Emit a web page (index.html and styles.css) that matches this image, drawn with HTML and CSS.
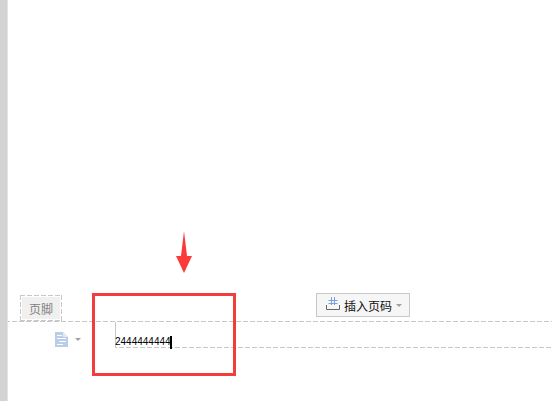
FILE: index.html
```html
<!DOCTYPE html>
<html lang="zh">
<head>
<meta charset="utf-8">
<title>页脚</title>
<link rel="stylesheet" href="styles.css">
</head>
<body>
<div class="app">
  <div class="gutter"></div>
  <main class="page">
    <div class="footer-head">
      <div class="tag"><span class="tag-text">页脚</span></div>
      <button class="insert-btn">
        <svg class="hash-icon" width="14" height="13" viewBox="0 0 14 13">
          <path d="M2.500 3.500h9M2.500 6.500h9M5.500 0v8M8.500 0v8" fill="none" stroke="#7aa0e0"/>
          <path d="M.5 8v4.500h13V8" fill="none" stroke="#666"/>
        </svg>
        <span class="btn-label">插入页码</span>
        <span class="caret"></span>
      </button>
    </div>
    <div class="footer-body">
      <div class="doc-tool">
        <svg width="13" height="15" viewBox="0 0 13 15">
          <path d="M0 0h8l5 5v10H0z" fill="#b9cde9"/>
          <path d="M8 0l5 5H8z" fill="#e3ebf6"/>
          <path d="M2 3.500h5M2 6.500h9M4 9.500h7M2 12.500h6" stroke="#fff" fill="none"/>
        </svg>
        <span class="caret"></span>
      </div>
      <div class="edit-box"><span class="edit-text">2444444444</span><span class="cursor"></span></div>
    </div>
  </main>
  <svg class="arrow" width="16" height="42" viewBox="0 0 16 42"><path d="M8 0l3 25h5L8 42 0 25h5z" fill="#fb3a3a"/></svg>
  <div class="highlight"></div>
</div>
</body>
</html>
```
FILE: styles.css
```css
* { box-sizing: border-box; }
html, body { margin: 0; height: 100%; background: #fff; overflow: hidden; }
.app { position: relative; display: flex; width: 552px; height: 401px; background: #fff; }
.gutter { width: 8px; background: #d3d3d3; border-right: 1px solid #e2e2e2; }
.page { flex: 1; display: flex; flex-direction: column; padding-top: 293px; }
.footer-head {
  height: 29px; display: flex; align-items: flex-start; position: relative;
  background: linear-gradient(90deg, #c8c8c8 5px, transparent 5px) 4px bottom / 7px 1px repeat-x;
}
.tag {
  margin: 2px 0 0 12px; width: 42px; height: 26px; display: flex; align-items: center; justify-content: center;
  background:
    linear-gradient(90deg, #c8c8c8 5px, transparent 5px) 0 0 / 7px 1px repeat-x,
    linear-gradient(90deg, #c8c8c8 5px, transparent 5px) 0 100% / 7px 1px repeat-x,
    linear-gradient(#c8c8c8 5px, transparent 5px) 0 0 / 1px 7px repeat-y,
    linear-gradient(#c8c8c8 5px, transparent 5px) 100% 0 / 1px 7px repeat-y,
    linear-gradient(#f0f0f0, #f0f0f0) center / 38px 22px no-repeat;
}
.tag-text { font: 12px "Noto Sans CJK SC", sans-serif; color: #808080; }
.insert-btn {
  margin: 0 0 0 254px; width: 94px; height: 24px; padding: 0 0 0 9px; display: flex; align-items: center;
  background: #f6f6f6; border: 1px solid #c8c8c8; border-radius: 0;
}
.hash-icon { flex: none; margin-bottom: 3px; }
.btn-label { font: 12px "Noto Sans CJK SC", sans-serif; color: #111; margin-left: 4px; white-space: nowrap; }
.caret { width: 0; height: 0; border: 3px solid transparent; border-top: 3px solid #a0a0a0; border-bottom: 0; margin-left: 4px; }
.footer-body { display: flex; align-items: flex-start; height: 26px; }
.doc-tool { display: flex; align-items: center; gap: 3px; margin: 10px 0 0 47px; width: 60px; }
.edit-box {
  flex: 1; height: 26px; border-left: 1px solid #c8c8c8; display: flex; align-items: center; padding-top: 14px;
  background: linear-gradient(90deg, #c8c8c8 5px, transparent 5px) 3px bottom / 7px 1px repeat-x;
}
.edit-text { font: 10px/12px "Liberation Sans", sans-serif; color: #000; margin-left: -1px; }
.cursor { width: 2px; height: 13px; background: #000; margin-left: -1px; }
.arrow { position: absolute; left: 176px; top: 231px; }
.highlight { position: absolute; left: 92px; top: 293px; width: 144px; height: 83px; border: 3px solid #f33c3c; }
```
